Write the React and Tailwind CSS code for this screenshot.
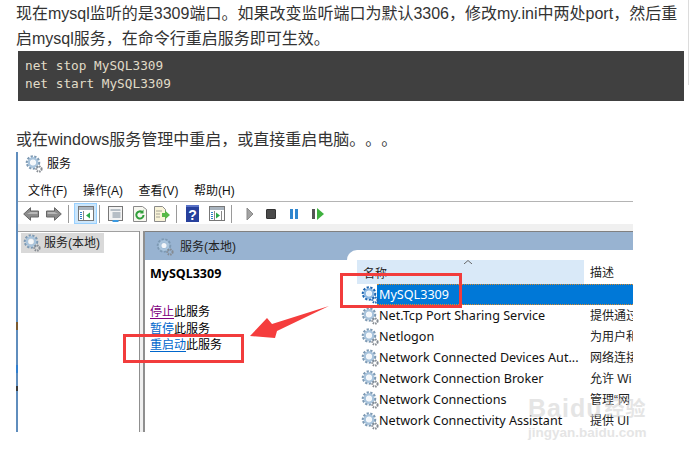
const cjk = "'Liberation Sans','Noto Sans CJK SC',sans-serif"
const noto = "'Noto Sans',sans-serif"

function Gear({ selected = false, className = '' }) {
  const teeth = selected ? '#1c64b0' : '#7d99b3'
  const ring = selected ? '#8db8e2' : '#a9c4dc'
  return (
    <svg viewBox="0 0 18 18" className={`w-[18px] h-[18px] shrink-0 ${className}`}>
      <circle cx="8" cy="7.500" r="6" fill="none" stroke={teeth} strokeWidth="2.500" strokeDasharray="2.200 1.400" />
      <circle cx="8" cy="7.500" r="4.200" fill="none" stroke={ring} strokeWidth="2.400" />
      <circle cx="8" cy="7.500" r="2.600" fill={selected ? '#e8f1fa' : '#f4f7fa'} />
      <circle cx="14" cy="14" r="2.600" fill="none" stroke={selected ? '#1c64b0' : '#858b92'} strokeWidth="2" strokeDasharray="1.500 0.900" />
    </svg>
  )
}

function ArrowIcon({ flip }) {
  return (
    <svg viewBox="0 0 16 14" className="w-4 h-[14px]" style={{ transform: flip ? 'scaleX(-1)' : undefined }}>
      <path d="M.7 7 7.500.7v3.300h8v6h-8v3.300z" fill="#8b8b8b" stroke="#666" />
      <path d="M7.500 5h7v2H4z" fill="#b8b8b8" />
    </svg>
  )
}

function Sep({ className = '' }) {
  return <div className={`w-px h-[18px] bg-[#9a9a9a] shrink-0 ${className}`} />
}

function WinIcon({ mark }) {
  return (
    <svg viewBox="0 0 16 15" className="w-4 h-[15px] shrink-0">
      <rect x="0.500" y="0.500" width="15" height="14" fill="#fff" stroke="#777" />
      <rect x="1" y="1" width="14" height="3" fill="#a9b4bf" />
      <path d="M2 6h2v1H2zM2 8h2v1H2zM2 10h2v1H2zM2 12h2v1H2z" fill="#2f7fc9" />
      <path d="M5.500 5v9" stroke="#888" />
      {mark === 'left' && <path d="M12 6.500v6l-4-3z" fill="#2aa84a" />}
      {mark === 'right' && <path d="M7 6.500v6l4-3z" fill="#2aa84a" />}
      {mark === 'right' && <path d="M12.500 5v9" stroke="#888" />}
    </svg>
  )
}

function Toolbar() {
  return (
    <div className="h-[23px] border-t border-[#b4b4b4] flex items-center pl-[5px] pt-px bg-white">
      <ArrowIcon />
      <div className="w-[7px]" />
      <ArrowIcon flip />
      <Sep className="ml-[6px]" />
      <div className="ml-[5px] w-[23px] h-[21px] bg-[#cce6fb] border border-[#99d1ff] flex items-center justify-center shrink-0">
        <WinIcon mark="left" />
      </div>
      <Sep className="ml-[2px]" />
      <svg viewBox="0 0 15 16" className="w-[15px] h-4 ml-[8px] shrink-0">
        <rect x="0.500" y="0.500" width="14" height="14" fill="#f3f3f3" stroke="#777" />
        <path d="M2.500 4h10M4.500 7h8M4.500 9h8M4.500 11h8" stroke="#7a8a99" />
        <rect x="4.500" y="14" width="6" height="2" fill="#3b9ae1" />
      </svg>
      <svg viewBox="0 0 14 16" className="w-[14px] h-4 ml-[10px] shrink-0">
        <path d="M.5.5h9l4 3v12H.5z" fill="#f7f7f0" stroke="#8a8a8a" />
        <path d="M10.500 9a3.600 3.600 0 1 1-1.200-2.700" fill="none" stroke="#2f9e3a" strokeWidth="2" />
        <path d="M10.500 3.500v4H7z" fill="#2f9e3a" />
      </svg>
      <svg viewBox="0 0 16 16" className="w-4 h-4 ml-[7px] shrink-0">
        <path d="M.5.5h8l3 3v12H.5z" fill="#f8f3d8" stroke="#8a8a8a" />
        <path d="M2.500 5h5M2.500 8h4M2.500 11h4" stroke="#555" strokeDasharray="1 1" />
        <path d="M8 7h3V4.500L16 9l-5 4.500V11H8z" fill="#58b947" />
      </svg>
      <Sep className="ml-[6px]" />
      <div
        className="ml-[9px] w-[13px] h-[17px] bg-[#27409c] border-t-2 border-[#5b74c8] flex items-center justify-center text-[14px] font-bold text-white leading-none shrink-0"
        style={{ fontFamily: "'Liberation Sans',sans-serif" }}
      >
        ?
      </div>
      <div className="ml-[10px]"><WinIcon mark="right" /></div>
      <Sep className="ml-[6px]" />
      <svg viewBox="0 0 8 14" className="w-2 h-[14px] ml-[14px] shrink-0"><path d="M1 1l6 6-6 6z" fill="#a3a3a3" stroke="#8a8a8a" /></svg>
      <div className="w-[10px] h-[10px] ml-[12px] bg-[#4a4a4a] rounded-[1px] border border-[#333] shrink-0" />
      <div className="ml-[14px] flex gap-[2px]">
        <div className="w-[3px] h-[10px] bg-[#2f86cf]" />
        <div className="w-[3px] h-[10px] bg-[#2f86cf]" />
      </div>
      <div className="ml-[14px] flex items-center gap-[2px]">
        <div className="w-[3px] h-[10px] bg-[#555]" />
        <svg viewBox="0 0 7 12" className="w-[7px] h-3"><path d="M0 0l7 6-7 6z" fill="#3fb13f" /></svg>
      </div>
    </div>
  )
}

const rows = [
  ['MySQL3309', ''],
  ['Net.Tcp Port Sharing Service', '提供通过'],
  ['Netlogon', '为用户和'],
  ['Network Connected Devices Aut...', '网络连接'],
  ['Network Connection Broker', '允许 Wi'],
  ['Network Connections', '管理“网'],
  ['Network Connectivity Assistant', '提供 UI'],
]

function ServiceRow({ name, desc, selected }) {
  return (
    <div className="h-[21px] flex items-center">
      <div className="w-[233px] flex items-center pl-[4px] shrink-0">
        <Gear selected={selected} />
        <span
          className={`h-[21px] leading-[21px] whitespace-nowrap text-[12.600px] ${selected ? 'text-white' : 'text-[#111]'}`}
          style={{ fontFamily: noto }}
        >
          {name}
        </span>
      </div>
      <span className="whitespace-nowrap text-[12px] text-[#222] overflow-hidden w-[43px]" style={{ fontFamily: cjk }}>{desc}</span>
    </div>
  )
}

function ServiceList() {
  return (
    <div className="flex-1 -mt-[10px] bg-white rounded-tl-[10px] pl-[10px] pt-[10px] relative">
      <div className="flex h-6 text-[12px] text-[#222]" style={{ fontFamily: cjk }}>
        <div className="w-[227px] bg-[#d9e9f8] pl-[6px] pt-[5px] relative">
          名称
          <svg viewBox="0 0 8 4" className="absolute left-[107px] top-[0px] w-2 h-1"><path d="M0 4l4-3.500 4 3.500" fill="none" stroke="#666" /></svg>
        </div>
        <div className="pl-[6px] pt-[4px]">描述</div>
      </div>
      <div className="relative">
        <div className="absolute left-[20px] top-0 right-0 h-[21px] bg-[#0078d7] border-y border-dotted border-[#d98a2b]" />
        <div className="relative">
          {rows.map((r, i) => (
            <ServiceRow key={r[0]} name={r[0]} desc={r[1]} selected={i === 0} />
          ))}
        </div>
      </div>
    </div>
  )
}

function DetailLink({ link, color }) {
  return (
    <div className="h-[16.500px] leading-[16.500px] text-[12px] text-black">
      <span className={`underline underline-offset-2 ${color}`}>{link}</span>此服务
    </div>
  )
}

function ServicesWindow() {
  return (
    <div className="ml-4 w-[617px] h-[280px] border-l-2 border-[#5f8dbd] flex flex-col bg-white" style={{ fontFamily: cjk }}>
      <div className="h-[22px] flex items-center pl-[7px] pt-[1px] text-[12px] text-[#111]">
        <Gear />
        <span className="ml-[4px]">服务</span>
      </div>
      <div className="h-[27px] flex items-center pl-[10px] gap-[15.600px] text-[12px] text-[#111] pt-[6px]">
        <span>文件(F)</span>
        <span>操作(A)</span>
        <span>查看(V)</span>
        <span>帮助(H)</span>
      </div>
      <Toolbar />
      <div className="h-[7px] bg-[#f0f0f0]" />
      <div className="flex-1 flex min-h-0">
        <div className="w-[121px] border-t border-[#a0a0a0] pt-[1px] pl-[3px]">
          <div className="w-[83px] h-5 bg-[#d9d9d9] flex items-center pl-[2px] text-[12px] text-[#222]">
            <Gear />
            <span className="ml-[3px]">服务(本地)</span>
          </div>
        </div>
        <div className="w-[6px] flex">
          <div className="w-px bg-[#8f8f8f]" />
          <div className="w-[3px] bg-[#f0f0f0]" />
          <div className="w-[2px] bg-[#8f8f8f]" />
        </div>
        <div className="flex-1 flex flex-col">
          <div className="h-[29px] bg-[#98b3d1] border-t border-[#808080] flex items-center pl-[11px] pt-[2px] text-[12px] text-[#222]">
            <Gear />
            <span className="ml-[6px]">服务(本地)</span>
          </div>
          <div className="flex flex-1">
            <div className="w-[202px] shrink-0 pl-[5px] pt-[6px]">
              <div className="text-[12.500px] font-bold text-black leading-[16px]" style={{ fontFamily: noto }}>MySQL3309</div>
              <div className="mt-[22px]">
                <DetailLink link="停止" color="text-[#800080]" />
                <DetailLink link="暂停" color="text-[#0066cc]" />
                <DetailLink link="重启动" color="text-[#0066cc]" />
              </div>
            </div>
            <ServiceList />
          </div>
        </div>
      </div>
    </div>
  )
}

export default function App() {
  return (
    <div className="relative w-[689px] h-[455px] bg-white overflow-hidden [text-spacing-trim:space-all]" style={{ fontFamily: cjk }}>
      <p className="pl-4 pt-px text-[16px] leading-[25px] text-[#333] h-[51px] w-[680px]">
        现在mysql监听的是3309端口。如果改变监听端口为默认3306，修改my.ini中两处port，然后重启mysql服务，在命令行重启服务即可生效。
      </p>
      <pre className="ml-[18px] w-[666px] h-[50px] bg-[#404040] pl-[7px] pt-[6px] text-[12.750px] leading-[18px] text-[#e0dcc8]" style={{ fontFamily: "'DejaVu Sans Mono',monospace" }}>
        {'net stop MySQL3309\nnet start MySQL3309'}
      </pre>
      <p className="pl-4 mt-[26px] text-[16px] leading-[25px] text-[#333]">或在windows服务管理中重启，或直接重启电脑。。。</p>
      <ServicesWindow />

      {/* annotations on top of the screenshot */}
      <div className="absolute right-0 top-0 w-px h-[85px] bg-[#dcdcdc]" />
      <div className="absolute left-[16px] top-[322px] w-[2px] h-2 bg-[#7a5a30]" />
      <div className="absolute left-[16px] top-[365px] w-[2px] h-2 bg-[#2f7fd0]" />
      <div className="absolute left-[16px] top-[386px] w-[2px] h-[5px] bg-[#3a3a3a]" />
      <div className="absolute left-[123px] top-[334px] w-[121px] h-[29px] border-[3px] border-[#f23c3c]" />
      <div className="absolute left-[340px] top-[273px] w-[122px] h-[35px] border-[3px] border-[#f23c3c]" />
      <svg viewBox="0 0 90 40" className="absolute left-[245px] top-[303px] w-[90px] h-[40px]">
        <path d="M5 33 22 15 27 21 84 3 32 28 30 35z" fill="#f53d3d" />
      </svg>
      <div className="absolute left-[528px] top-[396px] text-[#d4d4d4] opacity-60 leading-none select-none">
        <div className="text-[25px] font-bold flex items-center tracking-[1px]" style={{ fontFamily: cjk }}>
          Baidu<span className="text-[20px] ml-[2px]">经验</span>
        </div>
        <div className="text-[13.500px] font-bold mt-[5px]">jingyan.baidu.com</div>
      </div>
    </div>
  )
}
